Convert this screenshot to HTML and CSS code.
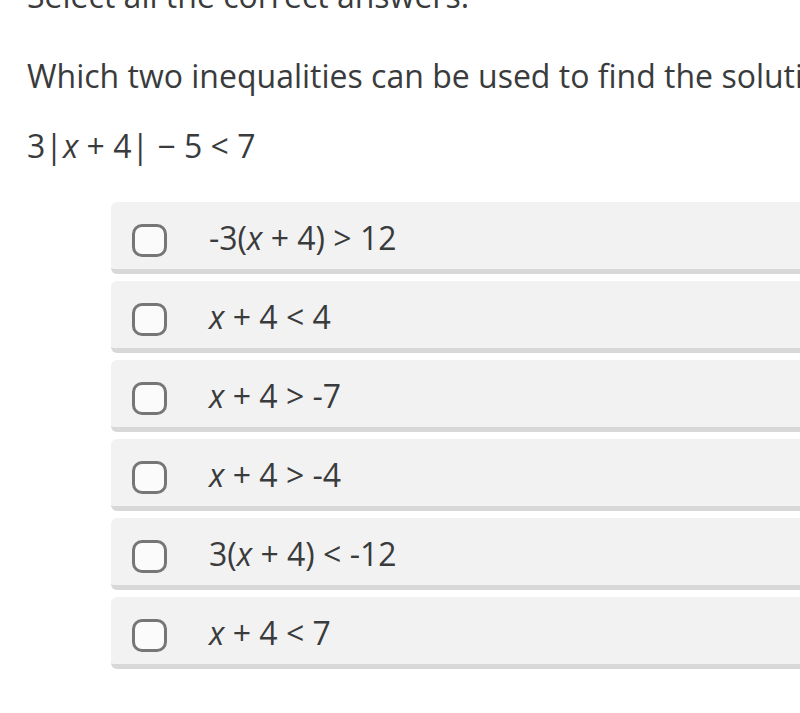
FILE: index.html
```html
<!DOCTYPE html>
<html lang="en">
<head>
<meta charset="utf-8">
<title>Select all the correct answers</title>
<link rel="stylesheet" href="styles.css">
</head>
<body>
<main class="page">
  <p class="line instructions">Select all the correct answers.</p>
  <p class="line question">Which two inequalities can be used to find the solution to this inequality?</p>
  <p class="line expression">3|<i>x</i> + 4| − 5 &lt; 7</p>
  <ul class="options">
    <li class="option"><span class="box"></span><span class="label">-3(<i>x</i> + 4) &gt; 12</span></li>
    <li class="option"><span class="box"></span><span class="label"><i>x</i> + 4 &lt; 4</span></li>
    <li class="option"><span class="box"></span><span class="label"><i>x</i> + 4 &gt; -7</span></li>
    <li class="option"><span class="box"></span><span class="label"><i>x</i> + 4 &gt; -4</span></li>
    <li class="option"><span class="box"></span><span class="label">3(<i>x</i> + 4) &lt; -12</span></li>
    <li class="option"><span class="box"></span><span class="label"><i>x</i> + 4 &lt; 7</span></li>
  </ul>
</main>
</body>
</html>
```

FILE: styles.css
```css
html, body {
  margin: 0;
  padding: 0;
  background: #ffffff;
  overflow: hidden;
}

.page {
  margin-top: -24px;
  padding-left: 27px;
  font-family: "Open Sans", "Noto Sans", sans-serif;
  color: #3a3b3c;
  white-space: nowrap;
}

.line {
  margin: 0;
  font-size: 32px;
  line-height: 40px;
}

.instructions {
  margin-bottom: 40px;
}

.question {
  margin-bottom: 30px;
}

.expression {
  margin-bottom: 36px;
}

.line i,
.label i {
  font-style: italic;
}

.options {
  list-style: none;
  margin: 0 -60px 0 84px;
  padding: 0;
  display: flex;
  flex-direction: column;
  gap: 7px;
}

.option {
  box-sizing: border-box;
  height: 72px;
  padding: 10px 0 0 21px;
  display: flex;
  align-items: center;
  gap: 42px;
  background: #f2f2f2;
  border-bottom: 5px solid #d8d8d8;
  border-radius: 6px;
}

.box {
  box-sizing: border-box;
  width: 35px;
  height: 33px;
  border: 3px solid #767676;
  border-radius: 10px;
  background: #fbfbfb;
  flex: none;
}

.label {
  font-size: 32px;
  line-height: 40px;
  margin-top: -6px;
}
```
